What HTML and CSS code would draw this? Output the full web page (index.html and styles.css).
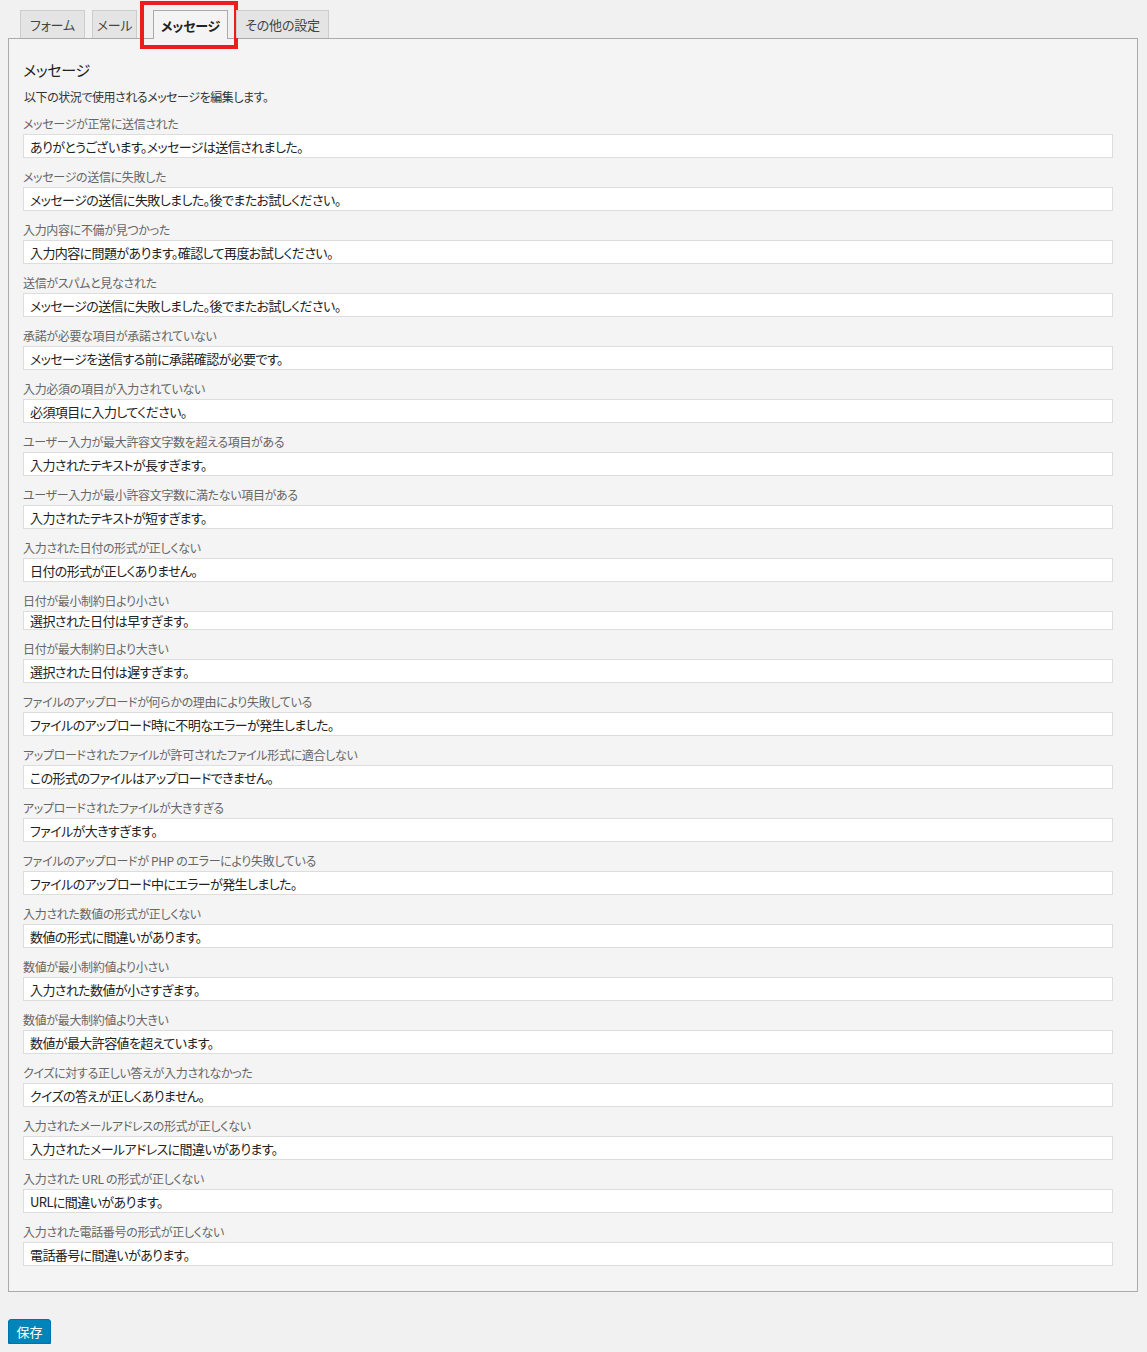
FILE: index.html
```html
<!DOCTYPE html>
<html lang="ja">
<head>
<meta charset="utf-8">
<title>メッセージ</title>
<link rel="stylesheet" href="styles.css">
</head>
<body>
<div class="page">
  <div class="tabs">
    <span class="tab tab-form">フォーム</span>
    <span class="tab tab-mail">メール</span>
    <span class="tab tab-msg active">メッセージ<span class="highlight"></span></span>
    <span class="tab tab-other">その他の設定</span>
  </div>
  <div class="panel">
    <h2 class="title">メッセージ</h2>
    <p class="desc">以下の状況で使用されるメッセージを編集します。</p>
    <div class="field"><label>メッセージが正常に送信された</label><input type="text" value="ありがとうございます。メッセージは送信されました。"></div>
    <div class="field"><label>メッセージの送信に失敗した</label><input type="text" value="メッセージの送信に失敗しました。後でまたお試しください。"></div>
    <div class="field"><label>入力内容に不備が見つかった</label><input type="text" value="入力内容に問題があります。確認して再度お試しください。"></div>
    <div class="field"><label>送信がスパムと見なされた</label><input type="text" value="メッセージの送信に失敗しました。後でまたお試しください。"></div>
    <div class="field"><label>承諾が必要な項目が承諾されていない</label><input type="text" value="メッセージを送信する前に承諾確認が必要です。"></div>
    <div class="field"><label>入力必須の項目が入力されていない</label><input type="text" value="必須項目に入力してください。"></div>
    <div class="field"><label>ユーザー入力が最大許容文字数を超える項目がある</label><input type="text" value="入力されたテキストが長すぎます。"></div>
    <div class="field"><label>ユーザー入力が最小許容文字数に満たない項目がある</label><input type="text" value="入力されたテキストが短すぎます。"></div>
    <div class="field"><label>入力された日付の形式が正しくない</label><input type="text" value="日付の形式が正しくありません。"></div>
    <div class="field"><label>日付が最小制約日より小さい</label><input class="short" type="text" value="選択された日付は早すぎます。"></div>
    <div class="field"><label>日付が最大制約日より大きい</label><input type="text" value="選択された日付は遅すぎます。"></div>
    <div class="field"><label>ファイルのアップロードが何らかの理由により失敗している</label><input type="text" value="ファイルのアップロード時に不明なエラーが発生しました。"></div>
    <div class="field"><label>アップロードされたファイルが許可されたファイル形式に適合しない</label><input type="text" value="この形式のファイルはアップロードできません。"></div>
    <div class="field"><label>アップロードされたファイルが大きすぎる</label><input type="text" value="ファイルが大きすぎます。"></div>
    <div class="field"><label>ファイルのアップロードが PHP のエラーにより失敗している</label><input type="text" value="ファイルのアップロード中にエラーが発生しました。"></div>
    <div class="field"><label>入力された数値の形式が正しくない</label><input type="text" value="数値の形式に間違いがあります。"></div>
    <div class="field"><label>数値が最小制約値より小さい</label><input type="text" value="入力された数値が小さすぎます。"></div>
    <div class="field"><label>数値が最大制約値より大きい</label><input type="text" value="数値が最大許容値を超えています。"></div>
    <div class="field"><label>クイズに対する正しい答えが入力されなかった</label><input type="text" value="クイズの答えが正しくありません。"></div>
    <div class="field"><label>入力されたメールアドレスの形式が正しくない</label><input type="text" value="入力されたメールアドレスに間違いがあります。"></div>
    <div class="field"><label>入力された URL の形式が正しくない</label><input type="text" value="URLに間違いがあります。"></div>
    <div class="field"><label>入力された電話番号の形式が正しくない</label><input type="text" value="電話番号に間違いがあります。"></div>
  </div>
  <button class="save" type="button">保存</button>
</div>
</body>
</html>
```

FILE: styles.css
```css
* { box-sizing: border-box; }
html, body {
  margin: 0;
  padding: 0;
  background: #f1f1f1;
}
body {
  font-family: "Noto Sans CJK JP", "Noto Sans", sans-serif;
  font-feature-settings: "palt";
  color: #333;
}
.page {
  padding: 10px 9px 0 8px;
}
.tabs {
  display: flex;
  gap: 7px;
  padding-left: 12px;
  height: 28px;
  position: relative;
  z-index: 2;
}
.tab {
  position: relative;
  display: flex;
  align-items: center;
  justify-content: center;
  height: 28px;
  padding: 0;
  background: #e4e4e4;
  border: 1px solid #ccc;
  border-bottom: none;
  font-size: 13px;
  letter-spacing: -0.2px;
  color: #444;
  white-space: nowrap;
}
.tab-form { width: 65px; }
.tab-mail { width: 45px; }
.tab-msg { width: 75px; }
.tab-other { width: 93px; margin-left: 1px; }
.tab.active {
  background: #f4f4f4;
  border-color: #aaa;
  height: 29px;
  font-weight: bold;
  color: #222;
  margin-left: 9px;
}
.highlight {
  position: absolute;
  left: -14px;
  top: -10px;
  width: 98px;
  height: 48px;
  border: 4px solid #ee1c1c;
  pointer-events: none;
}
.panel {
  background: #f4f4f4;
  border: 1px solid #aaa;
  padding: 20px 24px 15px 14px;
}
.title {
  margin: 0;
  font-size: 15px;
  line-height: 22px;
  font-weight: normal;
  letter-spacing: -0.3px;
  color: #222;
}
.desc {
  margin: 7px 0 9px 1px;
  font-size: 12px;
  line-height: 18px;
  letter-spacing: -0.45px;
  color: #333;
}
.field {
  display: flex;
  flex-direction: column;
  margin-bottom: 10px;
}
.field label {
  font-size: 12px;
  line-height: 18px;
  letter-spacing: -0.33px;
  color: #666;
  margin-bottom: 1px;
}
.field input {
  width: 100%;
  height: 24px;
  border: 1px solid #ddd;
  background: #fff;
  padding: 0 6px;
  font-family: "Noto Sans CJK JP", "Noto Sans", sans-serif;
  font-feature-settings: "palt";
  font-size: 13px;
  letter-spacing: -0.6px;
  color: #222;
  outline: none;
  margin: 0;
}
.field input.short {
  height: 19px;
  line-height: 17px;
}
.save {
  margin-top: 27px;
  height: 25px;
  width: 43px;
  padding: 0;
  background: #0085ba;
  border: 1px solid #0073aa;
  border-radius: 3px;
  box-shadow: 0 1px 0 #006799;
  color: #fff;
  font-family: "Noto Sans CJK JP", "Noto Sans", sans-serif;
  font-size: 13px;
}
```
